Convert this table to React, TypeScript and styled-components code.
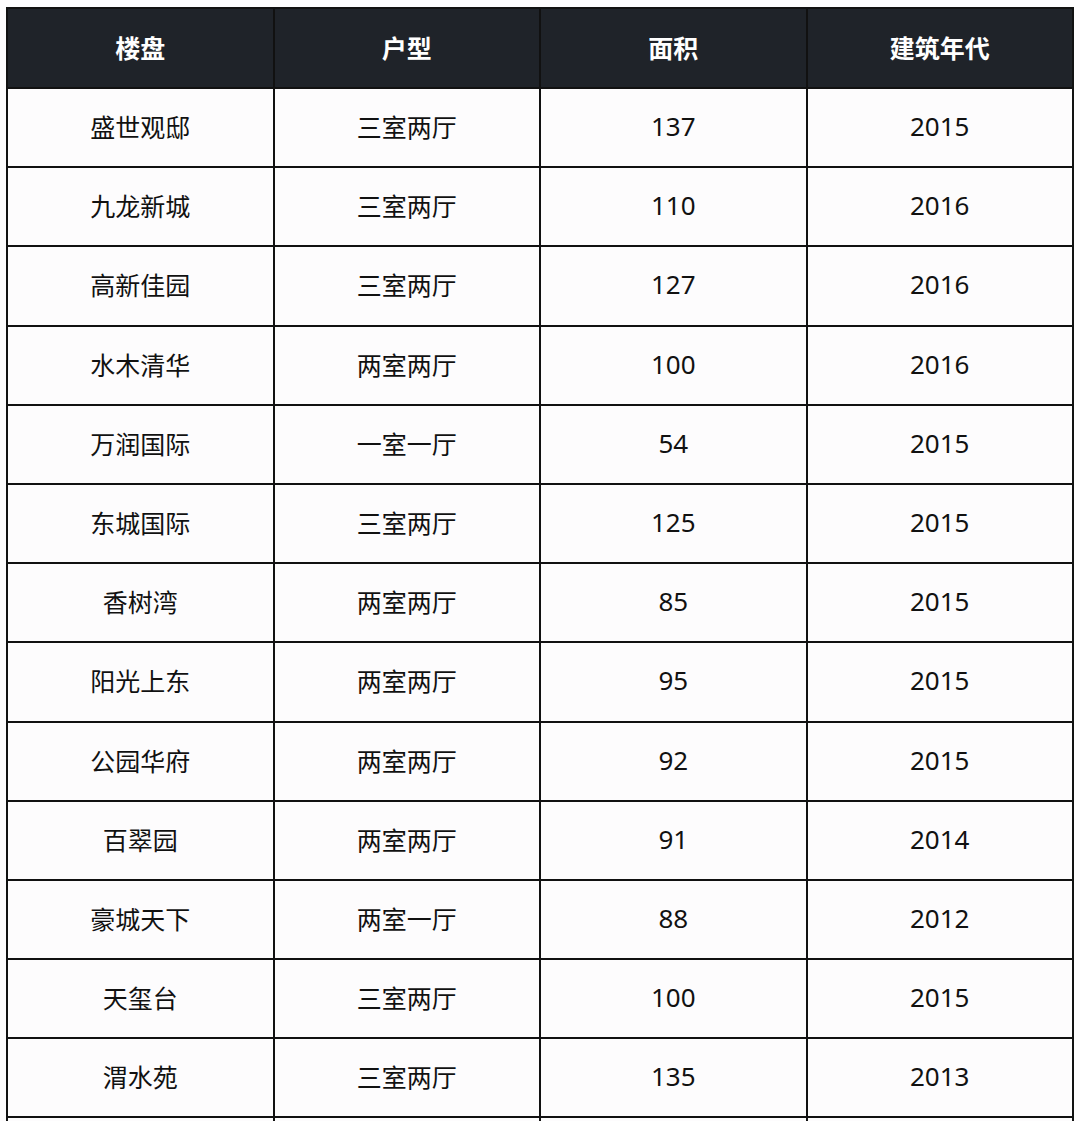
import React from 'react'
import styled, { createGlobalStyle } from 'styled-components'

const GlobalStyle = createGlobalStyle`
  html, body {
    margin: 0;
    padding: 0;
    background: #fdfcfd;
  }
  body {
    font-family: "Noto Sans", "Noto Sans CJK SC", sans-serif;
  }
`

interface Estate {
  name: string
  layout: string
  area: number
  year: number
}

const estates: Estate[] = [
  { name: '盛世观邸', layout: '三室两厅', area: 137, year: 2015 },
  { name: '九龙新城', layout: '三室两厅', area: 110, year: 2016 },
  { name: '高新佳园', layout: '三室两厅', area: 127, year: 2016 },
  { name: '水木清华', layout: '两室两厅', area: 100, year: 2016 },
  { name: '万润国际', layout: '一室一厅', area: 54, year: 2015 },
  { name: '东城国际', layout: '三室两厅', area: 125, year: 2015 },
  { name: '香树湾', layout: '两室两厅', area: 85, year: 2015 },
  { name: '阳光上东', layout: '两室两厅', area: 95, year: 2015 },
  { name: '公园华府', layout: '两室两厅', area: 92, year: 2015 },
  { name: '百翠园', layout: '两室两厅', area: 91, year: 2014 },
  { name: '豪城天下', layout: '两室一厅', area: 88, year: 2012 },
  { name: '天玺台', layout: '三室两厅', area: 100, year: 2015 },
  { name: '渭水苑', layout: '三室两厅', area: 135, year: 2013 }
]

const Page = styled.div`
  padding: 7px 6px 0 6px;
  height: 1121px;
  box-sizing: border-box;
  overflow: hidden;
`

const Table = styled.table`
  width: 1068px;
  border-collapse: collapse;
  table-layout: fixed;
  background: #fdfcfd;
`

const HeadCell = styled.th`
  height: 76px;
  padding: 0 0 2px 0;
  background: #1f2329;
  color: #ffffff;
  font-family: "Noto Sans CJK SC", sans-serif;
  font-weight: 700;
  font-size: 25px;
  text-align: center;
  border: 2px solid #111;
`

const Cell = styled.td<{ $cjk?: boolean }>`
  height: 74.2px;
  padding: 0 0 3px 0;
  color: #111;
  font-family: ${p => p.$cjk ? '"Noto Sans CJK SC", sans-serif' : '"Noto Sans", "Noto Sans CJK SC", sans-serif'};
  font-size: ${p => p.$cjk ? '25px' : '26px'};
  text-align: center;
  border: 2px solid #111;
`

export default function App () {
  return (
    <>
      <GlobalStyle />
      <Page>
        <Table>
          <thead>
            <tr>
              <HeadCell>楼盘</HeadCell>
              <HeadCell>户型</HeadCell>
              <HeadCell>面积</HeadCell>
              <HeadCell>建筑年代</HeadCell>
            </tr>
          </thead>
          <tbody>
            {estates.map(e => (
              <tr key={e.name}>
                <Cell $cjk>{e.name}</Cell>
                <Cell $cjk>{e.layout}</Cell>
                <Cell>{e.area}</Cell>
                <Cell>{e.year}</Cell>
              </tr>
            ))}
            {/* next row is cut off by the bottom of the screenshot */}
            <tr>
              <Cell />
              <Cell />
              <Cell />
              <Cell />
            </tr>
          </tbody>
        </Table>
      </Page>
    </>
  )
}
